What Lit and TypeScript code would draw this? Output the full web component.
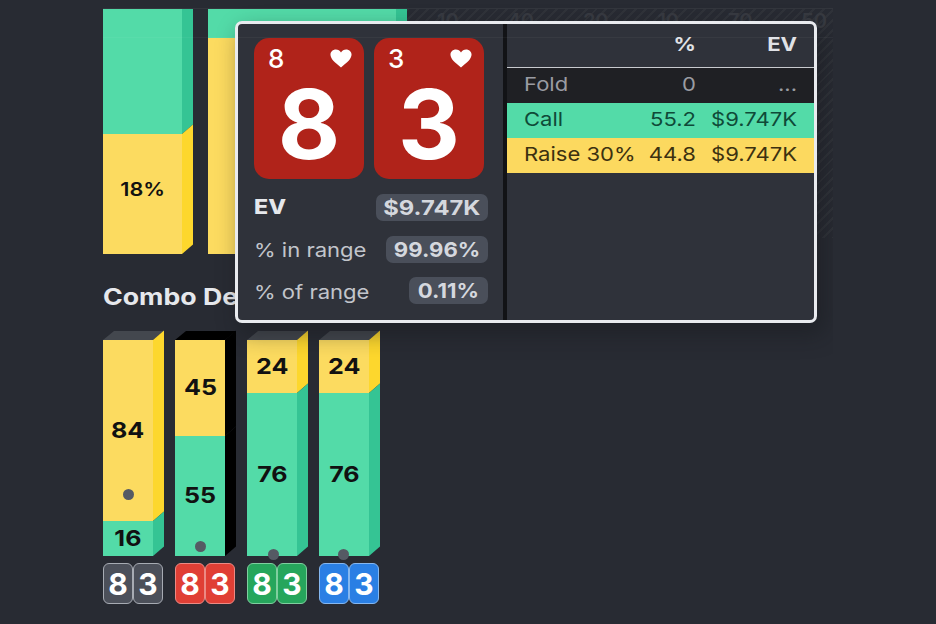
import { LitElement, html, css, nothing } from 'lit';
import { customElement, property } from 'lit/decorators.js';

type Seg = { color: 'yellow' | 'green'; size: number; label?: string };

@customElement('bar-3d')
export class Bar3d extends LitElement {
    static styles = css`
        :host {
            display: flex;
            flex-direction: column;
        }
        .cap {
            height: 9px;
            background: #43474e;
            clip-path: polygon(11px 0, 100% 0, calc(100% - 11px) 100%, 0 100%);
        }
        .cap.black { background: #000; }
        .body {
            display: flex;
            flex: 1;
            position: relative;
        }
        .face {
            flex: 1;
            display: flex;
            flex-direction: column;
            min-width: 0;
        }
        .side {
            width: 11px;
            flex: none;
            display: flex;
            flex-direction: column;
            transform: skewY(-41deg);
            transform-origin: left top;
        }
        .seg {
            display: flex;
            align-items: center;
            justify-content: center;
            box-sizing: border-box;
            padding-bottom: 2px;
            color: #111;
            font: 700 22px/1 Inter, sans-serif;
        }
        .seg span { transform: scaleX(1.14); }
        :host([small]) .seg {
            padding-bottom: 10px;
            font-size: 19px;
            font-weight: 600;
        }
        .face .yellow { background: #fcdb60; }
        .face .green { background: #53dba8; }
        .side .yellow { background: #fdd72d; }
        .side .green { background: #35c494; }
        .side.black .seg { background: #000; }
        .dot {
            position: absolute;
            width: 11px;
            height: 11px;
            margin-left: -5px;
            border-radius: 50%;
            background: #555a64;
        }
    `;

    @property({ type: Array }) segs: Seg[] = [];
    @property({ type: Boolean }) cap = true;
    @property({ type: Boolean }) black = false;
    @property({ type: Array }) dot: number[] | null = null;

    render() {
        const segs = this.segs.map(
            (s) => html`<div class="seg ${s.color}" style="height:${s.size}px">
                ${s.label ? html`<span>${s.label}</span>` : nothing}
            </div>`
        );
        const sideSegs = this.segs.map((s) => html`<div class="seg ${s.color}" style="height:${s.size}px"></div>`);
        return html`
            ${this.cap ? html`<div class="cap ${this.black ? 'black' : ''}"></div>` : nothing}
            <div class="body">
                <div class="face">${segs}</div>
                <div class="side ${this.black ? 'black' : ''}">${sideSegs}</div>
                ${this.dot
                    ? html`<div class="dot" style="left:${this.dot[0]}px;top:${this.dot[1]}px"></div>`
                    : nothing}
            </div>
        `;
    }
}

@customElement('app-root')
export class AppRoot extends LitElement {
    static styles = css`
        :host {
            display: block;
            width: 936px;
            height: 624px;
            overflow: hidden;
            background: #282b33;
            font-family: Inter, 'Liberation Sans', sans-serif;
            --sx: 1.16;
        }
        .content {
            position: relative;
            width: 730px;
            height: 616px;
            margin-left: 103px;
            padding-top: 8px;
            overflow: hidden;
        }
        .top-row {
            display: flex;
            gap: 15px;
            height: 245px;
            overflow: hidden;
            border-top: 1px solid #33363d;
        }
        .top-row bar-3d:nth-child(1) { width: 90px; flex: none; }
        .top-row bar-3d:nth-child(2) { width: 199px; flex: none; }
        .chart {
            flex: 1;
            margin-left: -15px;
            height: 229px;
            background: repeating-linear-gradient(135deg, #30333a 0 2px, #282b33 2px 7px);
            color: #383b42;
            font-size: 20px;
            font-weight: 600;
            display: flex;
            justify-content: space-between;
            padding: 0 6px 0 30px;
            box-sizing: border-box;
        }
        .scan {
            position: absolute;
            left: 0;
            right: 0;
            top: 37px;
            height: 1px;
            background: rgba(255, 255, 255, 0.04);
            z-index: 2;
        }
        h2 {
            margin: 29px 0 0;
            color: #e6e8ec;
            font-size: 23px;
            line-height: 28px;
            font-weight: 700;
            transform: scaleX(var(--sx));
            transform-origin: left center;
        }
        .combos {
            display: flex;
            gap: 11px;
            margin-top: 20px;
        }
        .combo {
            width: 61px;
            display: flex;
            flex-direction: column;
            gap: 7px;
        }
        .combo bar-3d { height: 225px; }
        .chip {
            display: flex;
            width: 60px;
            height: 41px;
        }
        .chip span {
            flex: 1;
            box-sizing: border-box;
            display: flex;
            align-items: center;
            justify-content: center;
            border: 1.5px solid #a7abb3;
            border-radius: 6px;
            color: #fff;
            font-size: 30px;
            font-weight: 700;
        }
        .chip.grey span { background: #4c505a; }
        .chip.red span { background: #e03f35; border-color: #ec8a84; }
        .chip.green span { background: #26a65c; border-color: #7fcf9f; }
        .chip.blue span { background: #2a7fe4; border-color: #85b7f0; }

        .tooltip {
            position: absolute;
            left: 132px;
            top: 21px;
            width: 582px;
            height: 302px;
            box-sizing: border-box;
            display: flex;
            background: #2f323a;
            border: 3px solid #e9ebef;
            border-radius: 7px;
            box-shadow: 6px 10px 22px 2px rgba(20, 22, 24, 0.4);
            z-index: 1;
        }
        .left {
            width: 269px;
            flex: none;
            box-sizing: border-box;
            padding: 14px 15px 0 16px;
            border-right: 4px solid #121316;
        }
        .cards {
            display: flex;
            gap: 10px;
        }
        .card {
            position: relative;
            width: 110px;
            height: 141px;
            border-radius: 15px;
            background: #b0231a;
            color: #fff;
            display: flex;
            align-items: center;
            justify-content: center;
            padding-top: 31px;
            box-sizing: border-box;
        }
        .big {
            font-size: 96px;
            line-height: 76px;
            font-weight: 700;
        }
        .rank {
            position: absolute;
            left: 14px;
            top: 5px;
            font-size: 26px;
            line-height: 32px;
            font-weight: 500;
        }
        .suit {
            position: absolute;
            right: 12px;
            top: 11px;
            width: 22px;
            height: 19px;
            fill: #fff;
        }
        .stats {
            display: flex;
            flex-direction: column;
            gap: 14.5px;
            margin-top: 15px;
        }
        .stat {
            display: flex;
            align-items: center;
            justify-content: space-between;
            height: 27px;
            color: #c2c5cb;
            font-size: 19px;
        }
        .stat .label {
            padding-top: 3px;
            transform: scaleX(var(--sx));
            transform-origin: left center;
        }
        .stat.ev .label {
            padding: 0 0 2px;
            color: #e6e8ec;
            font-size: 20px;
            font-weight: 800;
        }
        .pill {
            padding: 0 11px;
            border-radius: 7px;
            background: #4a4f5a;
            color: #d5d8de;
            font-size: 20.5px;
            line-height: 27px;
            font-weight: 700;
        }
        .pill span {
            display: inline-block;
            transform: scaleX(1.08);
        }
        .stat.ev .pill { padding: 0 14px; }
        .stat.ev .pill span { transform: scaleX(var(--sx)); }
        .right {
            flex: 1;
            min-width: 0;
        }
        .row {
            display: grid;
            grid-template-columns: 1fr 60px 101px;
            align-items: center;
            height: 35px;
            padding: 0 17px;
            font-size: 19px;
            box-sizing: border-box;
        }
        .row span {
            padding-bottom: 2px;
            transform: scaleX(var(--sx));
            transform-origin: left center;
        }
        .row span:nth-child(n + 2) {
            text-align: right;
            transform-origin: right center;
        }
        .row.head {
            height: 44px;
            color: #e0e2e6;
            font-weight: 700;
            border-bottom: 1px solid #c8cace;
        }
        .row.fold { background: #1f2024; color: #9a9ca2; }
        .row.call { background: #53dba8; color: #0f4a38; }
        .row.raise { background: #fcd95f; color: #3c3110; }
    `;

    private combos = [
        { yellow: 181, green: 35, y: '84', g: '16', chip: 'grey', dot: [25, 149] },
        { yellow: 96, green: 120, y: '45', g: '55', chip: 'red', dot: [25, 201], black: true },
        { yellow: 53, green: 163, y: '24', g: '76', chip: 'green', dot: [26, 209] },
        { yellow: 53, green: 163, y: '24', g: '76', chip: 'blue', dot: [24, 209] },
    ];

    private card(rank: string) {
        return html`
            <div class="card">
                <span class="rank">${rank}</span>
                <svg class="suit" viewBox="0 0 24 22" preserveAspectRatio="none">
                    <path d="M12 21.5C5 15.5 0.5 11.5 0.5 6.5 0.5 3 3.2 0.5 6.4 0.5 8.8 0.5 10.9 1.8 12 4 13.1 1.8 15.2 0.5 17.6 0.5 20.8 0.5 23.5 3 23.5 6.5 23.5 11.5 19 15.5 12 21.5Z" />
                </svg>
                <span class="big">${rank}</span>
            </div>
        `;
    }

    render() {
        return html`
            <div class="content">
                <div class="top-row">
                    <bar-3d
                        small
                        .cap=${false}
                        .segs=${[
                            { color: 'green', size: 125 },
                            { color: 'yellow', size: 120, label: '18%' },
                        ]}
                    ></bar-3d>
                    <bar-3d
                        .cap=${false}
                        .segs=${[
                            { color: 'green', size: 29 },
                            { color: 'yellow', size: 216 },
                        ]}
                    ></bar-3d>
                    <div class="chart">
                        <span>10</span><span>40</span><span>20</span><span>10</span><span>70</span><span>50</span>
                    </div>
                </div>
                <h2>Combo Details</h2>
                <div class="combos">
                    ${this.combos.map(
                        (c) => html`
                            <div class="combo">
                                <bar-3d
                                    .black=${!!c.black}
                                    .dot=${c.dot}
                                    .segs=${[
                                        { color: 'yellow', size: c.yellow, label: c.y },
                                        { color: 'green', size: c.green, label: c.g },
                                    ]}
                                ></bar-3d>
                                <div class="chip ${c.chip}"><span>8</span><span>3</span></div>
                            </div>
                        `
                    )}
                </div>
                <div class="scan"></div>
                <div class="tooltip">
                    <div class="left">
                        <div class="cards">${this.card('8')}${this.card('3')}</div>
                        <div class="stats">
                            <div class="stat ev">
                                <span class="label">EV</span><div class="pill"><span>$9.747K</span></div>
                            </div>
                            <div class="stat">
                                <span class="label">% in range</span><div class="pill"><span>99.96%</span></div>
                            </div>
                            <div class="stat">
                                <span class="label">% of range</span><div class="pill"><span>0.11%</span></div>
                            </div>
                        </div>
                    </div>
                    <div class="right">
                        <div class="row head"><span></span><span>%</span><span>EV</span></div>
                        <div class="row fold"><span>Fold</span><span>0</span><span>...</span></div>
                        <div class="row call"><span>Call</span><span>55.2</span><span>$9.747K</span></div>
                        <div class="row raise"><span>Raise 30%</span><span>44.8</span><span>$9.747K</span></div>
                    </div>
                </div>
            </div>
        `;
    }
}
